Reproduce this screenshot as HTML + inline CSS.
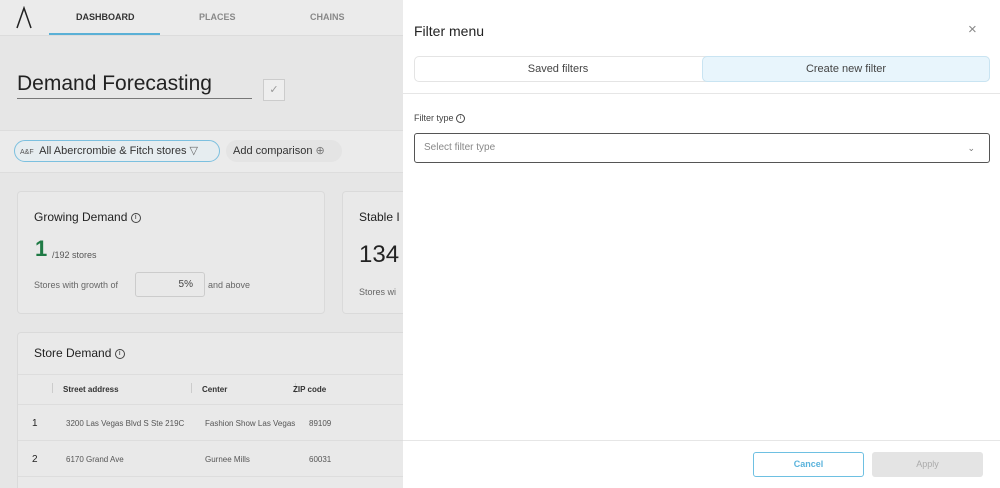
<!DOCTYPE html>
<html><head><meta charset="utf-8"><style>
*{box-sizing:border-box;margin:0;padding:0}
html,body{width:1000px;height:488px;overflow:hidden}
body{font-family:"Liberation Sans",sans-serif;background:#e6e6e6;position:relative;color:#222}
.abs{position:absolute}
.nav{left:0;top:0;width:403px;height:36px;background:#ebebeb;border-bottom:1px solid #dcdcdc}
.tab{position:absolute;top:12px;font-size:9px;font-weight:bold;color:#888}
.card{background:#e9e9e9;border:1px solid #dadada;border-radius:4px}
.panel{left:403px;top:0;width:597px;height:488px;background:#fff}
.info{display:inline-block;width:10px;height:10px;border:1px solid #444;border-radius:50%;font-size:7px;text-align:center;line-height:8px;vertical-align:middle}
</style></head><body>
<div class="abs nav">
<svg class="abs" style="left:15px;top:6px" width="18" height="24"><path d="M2 22 L9 2 L16 22" stroke="#222" stroke-width="1.5" fill="none"/></svg>
<div class="tab" style="left:76px;color:#333">DASHBOARD</div>
<div class="abs" style="left:49px;top:33px;width:111px;height:2px;background:#5ab0d6"></div>
<div class="tab" style="left:199px">PLACES</div>
<div class="tab" style="left:310px">CHAINS</div>
</div>
<div class="abs" style="left:17px;top:72px;font-size:21px;color:#222">Demand Forecasting</div>
<div class="abs" style="left:17px;top:98px;width:235px;height:1px;background:#777"></div>
<div class="abs" style="left:263px;top:79px;width:22px;height:22px;border:1px solid #ccc;background:#eee;color:#999;font-size:11px;text-align:center;line-height:20px">✓</div>
<div class="abs" style="left:0;top:130px;width:403px;height:43px;background:#ebebeb;border-top:1px solid #ddd;border-bottom:1px solid #ddd"></div>
<div class="abs" style="left:14px;top:140px;width:206px;height:22px;border:1px solid #7cc0df;border-radius:11px;background:#e6edf0;font-size:11px;line-height:20px;padding-left:5px;color:#333"><span style="font-size:7px;color:#555">A&amp;F</span>&nbsp; All Abercrombie &amp; Fitch stores <span style="color:#666">▽</span></div>
<div class="abs" style="left:226px;top:140px;width:116px;height:22px;border-radius:11px;background:#e4e4e4;font-size:11px;line-height:22px;padding-left:7px;color:#333">Add comparison <span style="color:#777">⊕</span></div>
<div class="abs card" style="left:17px;top:191px;width:308px;height:123px"></div>
<div class="abs" style="left:34px;top:210px;font-size:12px">Growing Demand <span class="info">i</span></div>
<div class="abs" style="left:35px;top:236px;font-size:22px;color:#1f7a45;font-weight:bold">1</div>
<div class="abs" style="left:52px;top:250px;font-size:9px;color:#555">/192 stores</div>
<div class="abs" style="left:34px;top:280px;font-size:9px;color:#666">Stores with growth of</div>
<div class="abs" style="left:135px;top:272px;width:70px;height:25px;border:1px solid #ccc;border-radius:3px;font-size:10px;text-align:right;padding-right:11px;line-height:24px;color:#444">5%</div>
<div class="abs" style="left:208px;top:280px;font-size:9px;color:#666">and above</div>
<div class="abs card" style="left:342px;top:191px;width:70px;height:123px"></div>
<div class="abs" style="left:359px;top:210px;font-size:12px">Stable I</div>
<div class="abs" style="left:359px;top:241px;font-size:24px;color:#222">134</div>
<div class="abs" style="left:359px;top:287px;font-size:9px;color:#666">Stores wi</div>
<div class="abs card" style="left:17px;top:332px;width:400px;height:170px"></div>
<div class="abs" style="left:34px;top:346px;font-size:12px">Store Demand <span class="info">i</span></div>
<div class="abs" style="left:18px;top:374px;width:390px;height:31px;border-top:1px solid #ddd;border-bottom:1px solid #ddd"></div>
<div class="abs" style="left:52px;top:383px;width:1px;height:10px;background:#ccc"></div>
<div class="abs" style="left:63px;top:385px;font-size:8px;font-weight:bold;color:#333">Street address</div>
<div class="abs" style="left:191px;top:383px;width:1px;height:10px;background:#ccc"></div>
<div class="abs" style="left:202px;top:385px;font-size:8px;font-weight:bold;color:#333">Center</div>
<div class="abs" style="left:295px;top:383px;width:1px;height:10px;background:#ccc"></div>
<div class="abs" style="left:293px;top:385px;font-size:8px;font-weight:bold;color:#333">ZIP code</div>
<div class="abs" style="left:32px;top:418px;font-size:10px">1</div>
<div class="abs" style="left:66px;top:419px;font-size:8px;color:#555;width:126px;overflow:hidden;white-space:nowrap">3200 Las Vegas Blvd S Ste 219C</div>
<div class="abs" style="left:205px;top:419px;font-size:8px;color:#555;width:91px;overflow:hidden;white-space:nowrap">Fashion Show Las Vegas</div>
<div class="abs" style="left:309px;top:419px;font-size:8px;color:#555">89109</div>
<div class="abs" style="left:18px;top:440px;width:390px;height:1px;background:#ddd"></div>
<div class="abs" style="left:32px;top:454px;font-size:10px">2</div>
<div class="abs" style="left:66px;top:455px;font-size:8px;color:#555">6170 Grand Ave</div>
<div class="abs" style="left:205px;top:455px;font-size:8px;color:#555">Gurnee Mills</div>
<div class="abs" style="left:309px;top:455px;font-size:8px;color:#555">60031</div>
<div class="abs" style="left:18px;top:476px;width:390px;height:1px;background:#ddd"></div>

<div class="abs panel">
<div class="abs" style="left:11px;top:23px;font-size:14px;color:#222">Filter menu</div>
<div class="abs" style="left:565px;top:21px;font-size:15px;color:#888">×</div>
<div class="abs" style="left:11px;top:56px;width:576px;height:26px;border:1px solid #e4e4e4;border-radius:5px"></div>
<div class="abs" style="left:11px;top:56px;width:288px;text-align:center;font-size:11px;line-height:26px;color:#444">Saved filters</div>
<div class="abs" style="left:299px;top:56px;width:288px;height:26px;background:#e8f5fc;border:1px solid #c9e4f2;border-radius:5px;text-align:center;font-size:11px;line-height:24px;color:#444">Create new filter</div>
<div class="abs" style="left:0;top:93px;width:597px;height:1px;background:#e6e6e6"></div>
<div class="abs" style="left:11px;top:113px;font-size:9px;color:#444">Filter type <span class="info" style="width:9px;height:9px;font-size:6px;line-height:7px">i</span></div>
<div class="abs" style="left:11px;top:133px;width:576px;height:30px;border:1px solid #555;border-radius:3px;font-size:10px;color:#888;line-height:28px;padding-left:9px">Select filter type<span style="position:absolute;right:14px;top:0;color:#777;font-size:9px">⌄</span></div>
<div class="abs" style="left:0;top:440px;width:597px;height:1px;background:#e6e6e6"></div>
<div class="abs" style="left:350px;top:452px;width:111px;height:25px;border:1px solid #6ec0e2;border-radius:3px;text-align:center;line-height:23px;font-size:9px;font-weight:bold;color:#5ab3dc">Cancel</div>
<div class="abs" style="left:469px;top:452px;width:111px;height:25px;background:#e4e4e4;border-radius:3px;text-align:center;line-height:25px;font-size:9px;color:#aaa">Apply</div>
</div>
</body></html>
